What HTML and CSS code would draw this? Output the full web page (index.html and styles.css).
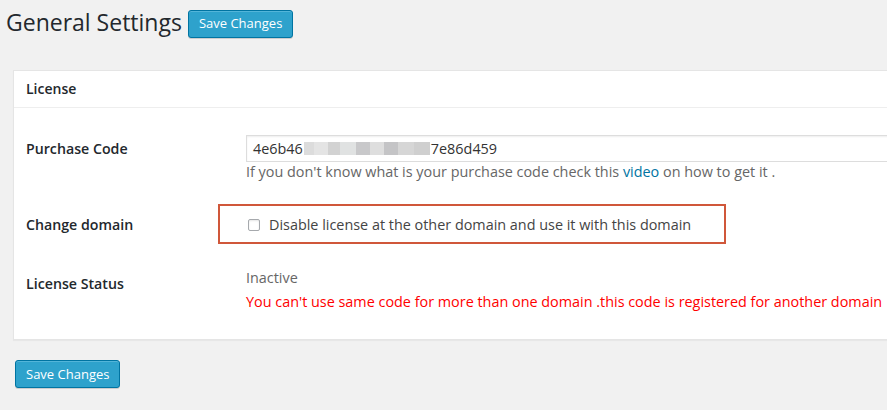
FILE: index.html
```html
<!DOCTYPE html>
<html>
<head>
<meta charset="utf-8">
<link rel="stylesheet" href="styles.css">
</head>
<body>
<div class="page">
  <div class="title-row">
    <h1 class="title">General Settings</h1>
    <button class="btn">Save Changes</button>
  </div>
  <div class="panel">
    <div class="panel-head">License</div>
    <div class="panel-body">
      <div class="row row-code">
        <div class="label label-input">Purchase Code</div>
        <div class="field">
          <div class="input"><span>4e6b46</span><span class="blur"><i class="b1"></i><i class="b2"></i><i class="b3"></i><i class="b4"></i><i class="b5"></i><i class="b6"></i><i class="b7"></i><i class="b8"></i><i class="b9"></i></span><span>7e86d459</span></div>
          <div class="help">If you don't know what is your purchase code check this <a class="link">video</a> on how to get it .</div>
        </div>
      </div>
      <div class="row row-domain">
        <div class="label label-box">Change domain</div>
        <div class="field">
          <div class="highlight"><span class="check"></span><span class="check-label">Disable license at the other domain and use it with this domain</span></div>
        </div>
      </div>
      <div class="row row-status">
        <div class="label label-status">License Status</div>
        <div class="field">
          <div class="status">Inactive</div>
          <div class="error">You can't use same code for more than one domain .this code is registered for another domain</div>
        </div>
      </div>
    </div>
  </div>
  <div class="footer">
    <button class="btn">Save Changes</button>
  </div>
</div>
</body>
</html>
```

FILE: styles.css
```css
html, body {
  margin: 0;
  padding: 0;
  background: #f1f1f1;
  overflow: hidden;
}
body {
  width: 887px;
  height: 410px;
  font-family: "Open Sans", "Liberation Sans", sans-serif;
  font-size: 14.4px;
  color: #444;
}
.page {
  padding-top: 6px;
}
.title-row {
  display: flex;
  align-items: center;
  padding-left: 6px;
  height: 33px;
}
.title {
  margin: 0;
  font-size: 23px;
  font-weight: 400;
  line-height: 29px;
  color: #23282d;
}
.btn {
  font-family: "Open Sans", "Liberation Sans", sans-serif;
  font-size: 13px;
  line-height: 25px;
  height: 28px;
  padding: 0 10px;
  background: #2ea2cc;
  border: 1px solid #0074a2;
  border-radius: 3px;
  color: #fff;
  box-shadow: inset 0 1px 0 rgba(120,200,230,0.5), 0 1px 0 rgba(0,0,0,0.15);
  cursor: pointer;
}
.title-row .btn {
  margin-left: 6px;
  margin-top: 2px;
}
.panel {
  margin-top: 31px;
  margin-left: 13px;
  width: 900px;
  background: #fff;
  border: 1px solid #e5e5e5;
  box-shadow: 0 1px 1px rgba(0,0,0,0.04);
}
.panel-head {
  height: 36px;
  line-height: 36px;
  padding-left: 12px;
  font-weight: 600;
  font-size: 14px;
  color: #23282d;
  border-bottom: 1px solid #eee;
}
.panel-body {
  padding: 27px 0 27px 12px;
}
.row {
  display: grid;
  grid-template-columns: 220px 1fr;
}
.label {
  font-weight: 600;
  font-size: 14.2px;
  color: #23282d;
  line-height: 20px;
}
.label-input {
  padding-top: 4px;
}
.label-box {
  padding-top: 11px;
}
.label-status {
  padding-top: 6px;
}
.input {
  height: 25px;
  border: 1px solid #ddd;
  box-shadow: inset 0 1px 2px rgba(0,0,0,0.07);
  display: flex;
  align-items: center;
  padding-left: 6px;
  color: #333;
}
.blur {
  display: inline-flex;
  height: 13px;
  margin: 0 1px;
}
.blur i {
  display: block;
  height: 13px;
}
.b1 { width: 10px; background: #dcdcdc; }
.b2 { width: 14px; background: #e4e4e4; }
.b3 { width: 12px; background: #d2d2d2; }
.b4 { width: 16px; background: #e0e2e2; }
.b5 { width: 14px; background: #c8c8ca; }
.b6 { width: 14px; background: #dedede; }
.b7 { width: 14px; background: #c4c4c6; }
.b8 { width: 16px; background: #d6d6d6; }
.b9 { width: 16px; background: #cfcfcf; }
.help {
  line-height: 19px;
  color: #666;
}
.link {
  color: #0074a2;
  text-decoration: none;
}
.row-domain {
  margin-top: 23px;
}
.highlight {
  display: flex;
  align-items: center;
  width: 476px;
  height: 36px;
  margin-left: -28px;
  padding-left: 28px;
  border: 2px solid #d0573a;
  color: #444;
}
.check-label {
  font-size: 14.4px;
}
.check {
  width: 10px;
  height: 10px;
  border: 1px solid #a6a9ad;
  border-radius: 2px;
  box-shadow: inset 0 1px 2px rgba(0,0,0,0.1);
  margin-right: 9px;
  margin-top: 1px;
}
.row-status {
  margin-top: 24px;
}
.status {
  line-height: 20px;
  color: #666;
}
.error {
  line-height: 20px;
  margin-top: 4px;
  color: #f00;
  white-space: nowrap;
}
.footer {
  padding: 20px 0 0 15px;
}
```
